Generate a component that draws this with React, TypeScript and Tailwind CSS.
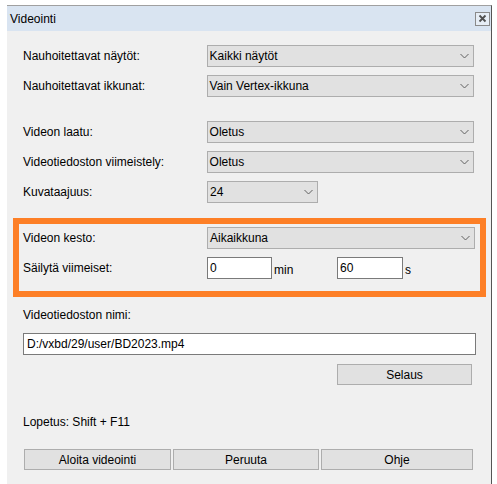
import React from "react";

const font = { fontFamily: '"Liberation Sans", Arial, sans-serif' };

function Chevron() {
  return (
    <svg width="9" height="6" viewBox="0 0 9 6" className="absolute right-[4px] top-1/2 -translate-y-1/2">
      <path d="M0.5 1 L4.5 5 L8.5 1" fill="none" stroke="#606060" strokeWidth="1" />
    </svg>
  );
}

function Select({ value, className = "" }: { value: string; className?: string }) {
  return (
    <div
      className={`relative h-[22px] bg-[#e1e1e1] border border-[#adadad] flex items-center pl-[2px] text-[12px] text-black ${className}`}
    >
      <span>{value}</span>
      <Chevron />
    </div>
  );
}

function Input({ value, className = "" }: { value: string; className?: string }) {
  return (
    <div className={`h-[22px] bg-white border border-[#7a7a7a] flex items-center pl-[2px] text-[12px] text-black ${className}`}>
      {value}
    </div>
  );
}

function Button({ label, className = "" }: { label: string; className?: string }) {
  return (
    <div className={`h-[21px] bg-[#e1e1e1] border border-[#adadad] flex items-center justify-center text-[12px] text-black ${className}`}>
      {label}
    </div>
  );
}

function Row({ label, children, className = "" }: { label: string; children: React.ReactNode; className?: string }) {
  return (
    <div className={`flex items-center h-[22px] ${className}`}>
      <div className="w-[184px] text-[12px] text-black">{label}</div>
      {children}
    </div>
  );
}

export default function App() {
  return (
    <div className="w-[497px] h-[484px] bg-white pl-[7px] pt-[5px] overflow-hidden" style={font}>
      <div className="w-[485px] h-[479px] border-t border-r border-t-[#a0a0a0] border-r-[#555555] flex flex-col">
        <div className="h-[25px] bg-[#d9e4f1] flex items-center justify-between pl-[3px] pr-[1px]">
          <span className="text-[12px] text-black">Videointi</span>
          <div className="w-[15px] h-[14px] border border-[#8a8a8a] bg-[#e6edf5] flex items-center justify-center">
            <svg width="9" height="9" viewBox="0 0 9 9">
              <path d="M1.5 1.5 L7.5 7.5 M7.5 1.5 L1.5 7.5" stroke="#505050" strokeWidth="1.8" />
            </svg>
          </div>
        </div>
        <div className="flex-1 bg-[#f0f0f0] flex flex-col pl-[16px] pr-[17px]">
          <Row label="Nauhoitettavat näytöt:" className="mt-[14px]">
            <Select value="Kaikki näytöt" className="w-[268px]" />
          </Row>
          <Row label="Nauhoitettavat ikkunat:" className="mt-[8px]">
            <Select value="Vain Vertex-ikkuna" className="w-[268px]" />
          </Row>
          <Row label="Videon laatu:" className="mt-[24px]">
            <Select value="Oletus" className="w-[268px]" />
          </Row>
          <Row label="Videotiedoston viimeistely:" className="mt-[8px]">
            <Select value="Oletus" className="w-[268px]" />
          </Row>
          <Row label="Kuvataajuus:" className="mt-[8px]">
            <Select value="24" className="w-[111px]" />
          </Row>
          <div className="mt-[15px] -ml-[10px] w-[473px] h-[79px] border-[6px] border-[#fd7f26] pl-[4px] pt-[3px]">
            <Row label="Videon kesto:">
              <Select value="Aikaikkuna" className="w-[268px]" />
            </Row>
            <Row label="Säilytä viimeiset:" className="mt-[8px]">
              <Input value="0" className="w-[65px]" />
              <span className="ml-[2px] w-[63px] text-[12px] text-black pt-[3px]">min</span>
              <Input value="60" className="w-[66px]" />
              <span className="ml-[2px] text-[12px] text-black pt-[3px]">s</span>
            </Row>
          </div>
          <div className="mt-[10px] h-[16px] flex items-center text-[12px] text-black">Videotiedoston nimi:</div>
          <Input value="D:/vxbd/29/user/BD2023.mp4" className="mt-[10px] w-[453px] pl-[3px]" />
          <div className="flex justify-end mt-[9px] pr-[2px]">
            <Button label="Selaus" className="w-[135px]" />
          </div>
          <div className="mt-[29px] h-[16px] flex items-center text-[12px] text-black">Lopetus: Shift + F11</div>
          <div className="mt-[19px] flex gap-[2px] pl-[1px]">
            <Button label="Aloita videointi" className="w-[147px]" />
            <Button label="Peruuta" className="w-[146px]" />
            <Button label="Ohje" className="w-[152px]" />
          </div>
        </div>
      </div>
    </div>
  );
}
